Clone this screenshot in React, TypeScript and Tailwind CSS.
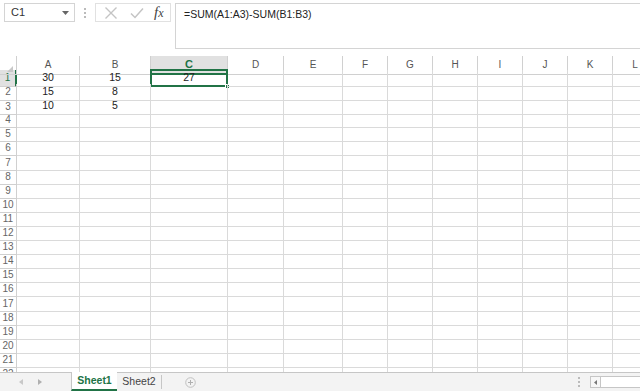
import React from 'react';

const COLS = ['A', 'B', 'C', 'D', 'E', 'F', 'G', 'H', 'I', 'J', 'K', 'L'];
const ROWS = Array.from({ length: 22 }, (_, i) => i + 1);

const DATA: Record<string, string> = {
    A1: '30', B1: '15', C1: '27',
    A2: '15', B2: '8',
    A3: '10', B3: '5',
};

const gridCols = 'grid grid-cols-[17px_63px_71px_77px_56px_59px_45px_45px_45px_45px_45px_45px_45px]';

function FormulaBar() {
    return (
        <div className="flex items-start h-[56px] pt-[3px] pl-[4px]">
            {/* Name box */}
            <div className="flex items-center justify-between w-[71px] h-[19px] border border-[#d4d4d4] pl-[6px] pr-[5px] text-[11px] text-[#333]">
                <span>C1</span>
                <svg width="7" height="4" viewBox="0 0 7 4"><path d="M0 0h7L3.5 4z" fill="#666" /></svg>
            </div>
            <div className="flex flex-col gap-[2px] ml-[9px] mt-[5px]">
                <span className="w-[2px] h-[2px] bg-[#bbb]" />
                <span className="w-[2px] h-[2px] bg-[#bbb]" />
                <span className="w-[2px] h-[2px] bg-[#bbb]" />
            </div>
            {/* Cancel / enter / fx */}
            <div className="flex items-center h-[19px] w-[76px] ml-[9px] border border-[#e1e1e1] pl-[8px]">
                <svg width="14" height="14" viewBox="0 0 14 14" className="mr-[12px]">
                    <path d="M1.5 1.5l11 11M12.5 1.5l-11 11" stroke="#c4c4c4" strokeWidth="1.4" fill="none" />
                </svg>
                <svg width="14" height="14" viewBox="0 0 14 14" className="mr-[10px]">
                    <path d="M1 7.5l4 4L13 2.5" stroke="#c4c4c4" strokeWidth="1.5" fill="none" />
                </svg>
                <span className="italic text-[15px] leading-none text-[#444] font-['Liberation_Serif',serif]">f<span className="text-[12px]">x</span></span>
            </div>
            {/* Formula text */}
            <div className="flex-1 h-[46px] ml-[4px] border border-[#d4d4d4] border-r-0 pl-[8px] pt-[3px] text-[10.5px] text-[#222]">
                =SUM(A1:A3)-SUM(B1:B3)
            </div>
        </div>
    );
}

function Grid() {
    return (
        <div className="flex-1 overflow-hidden">
            <div className={`${gridCols} h-[14px]`}>
                <div className="relative border-r border-b border-[#d0d0d0]">
                    <svg width="6" height="6" viewBox="0 0 6 6" className="absolute right-[3px] bottom-[2px]">
                        <path d="M6 0v6H0z" fill="#c8c8c8" />
                    </svg>
                </div>
                {COLS.map((c) => (
                    <div
                        key={c}
                        className={
                            c === 'C'
                                ? 'flex items-center justify-center bg-[#e1e1e1] border-r border-[#d0d0d0] border-b-2 border-b-[#217346] text-[11px] font-bold text-[#217346]'
                                : 'flex items-center justify-center border-r border-b border-[#d0d0d0] text-[10px] text-[#555]'
                        }
                    >
                        {c}
                    </div>
                ))}
            </div>
            {ROWS.map((r) => (
                <div key={r} className={`${gridCols} h-[14.1px]`}>
                    <div
                        className={
                            r === 1
                                ? 'flex items-center justify-center bg-[#e1e1e1] border-b border-[#d0d0d0] border-r-2 border-r-[#217346] text-[10px] text-[#217346]'
                                : 'flex items-center justify-center border-r border-b border-[#d0d0d0] text-[10px] text-[#666]'
                        }
                    >
                        {r}
                    </div>
                    {COLS.map((c) => {
                        const key = `${c}${r}`;
                        const selected = key === 'C1';
                        return (
                            <div
                                key={key}
                                className="relative flex items-center justify-center border-r border-b border-[#dadada] text-[10.5px] text-[#222]"
                            >
                                {DATA[key]}
                                {selected && (
                                    <>
                                        <div className="absolute -left-[1px] -top-[1px] -right-[1px] -bottom-[1px] border-2 border-[#217346]" />
                                        <div className="absolute -right-[3px] -bottom-[3px] w-[5px] h-[5px] bg-[#217346] border border-white" />
                                    </>
                                )}
                            </div>
                        );
                    })}
                </div>
            ))}
        </div>
    );
}

function TabBar() {
    return (
        <div className="flex items-stretch h-[19px] bg-[#f3f3f3] border-t border-[#c6c6c6] text-[10.5px]">
            <div className="flex items-center w-[71px] pl-[19px] gap-[15px]">
                <svg width="4" height="6" viewBox="0 0 4 6"><path d="M4 0v6L0 3z" fill="#c8c8c8" /></svg>
                <svg width="4" height="6" viewBox="0 0 4 6"><path d="M0 0v6l4-3z" fill="#b0b0b0" /></svg>
            </div>
            <div className="flex items-center justify-center w-[46px] -mt-[1px] bg-white border-l border-[#c6c6c6] border-b-2 border-b-[#217346] font-bold text-[#217346]">
                Sheet1
            </div>
            <div className="flex items-center justify-center w-[44px] text-[#444]">
                Sheet2
            </div>
            <div className="w-[1px] my-[2px] bg-[#c6c6c6]" />
            <div className="flex items-center ml-[23px]">
                <svg width="11" height="11" viewBox="0 0 11 11">
                    <circle cx="5.5" cy="5.5" r="4.8" stroke="#c0c0c0" fill="none" strokeWidth="1" />
                    <path d="M5.5 3v5M3 5.5h5" stroke="#b0b0b0" strokeWidth="1" />
                </svg>
            </div>
            <div className="flex-1" />
            <div className="flex flex-col justify-center gap-[2px] mr-[10px]">
                <span className="w-[2px] h-[2px] bg-[#bbb]" />
                <span className="w-[2px] h-[2px] bg-[#bbb]" />
                <span className="w-[2px] h-[2px] bg-[#bbb]" />
            </div>
            <div className="flex items-center my-[3px] w-[50px] border border-[#c6c6c6] border-r-0 bg-white">
                <div className="flex items-center justify-center w-[10px] h-full border-r border-[#c6c6c6] bg-[#f7f7f7]">
                    <svg width="3" height="5" viewBox="0 0 3 5"><path d="M3 0v5L0 2.5z" fill="#777" /></svg>
                </div>
            </div>
        </div>
    );
}

export default function App() {
    return (
        <div className="flex flex-col w-[640px] h-[391px] overflow-hidden bg-white font-['Liberation_Sans',Arial,sans-serif]">
            <FormulaBar />
            <Grid />
            <TabBar />
        </div>
    );
}
